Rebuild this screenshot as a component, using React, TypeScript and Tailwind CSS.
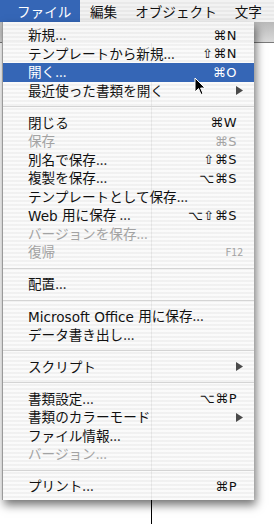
import React from 'react';

type Entry =
  | { label: React.ReactNode; keys?: string; off?: boolean; sub?: boolean; on?: boolean; fkey?: string }
  | 'sep';

// Latin words sit on the CJK baseline without growing the line box
const Latin = ({ children }: { children: React.ReactNode }) => (
  <span
    className="relative top-[1.2px] align-top text-[13.6px] leading-none"
    style={{ fontFamily: '"DejaVu Sans", sans-serif' }}
  >
    {children}
  </span>
);

const entries: Entry[] = [
  { label: '新規...', keys: '⌘N' },
  { label: 'テンプレートから新規...', keys: '⇧⌘N' },
  { label: '開く...', keys: '⌘O', on: true },
  { label: '最近使った書類を開く', sub: true },
  'sep',
  { label: '閉じる', keys: '⌘W' },
  { label: '保存', keys: '⌘S', off: true },
  { label: '別名で保存...', keys: '⇧⌘S' },
  { label: '複製を保存...', keys: '⌥⌘S' },
  { label: 'テンプレートとして保存...' },
  { label: <><Latin>Web </Latin>用に保存 ...</>, keys: '⌥⇧⌘S' },
  { label: 'バージョンを保存...', off: true },
  { label: '復帰', fkey: 'F12', off: true },
  'sep',
  { label: '配置...' },
  'sep',
  { label: <><Latin>Microsoft Office </Latin>用に保存...</> },
  { label: 'データ書き出し...' },
  'sep',
  { label: 'スクリプト', sub: true },
  'sep',
  { label: '書類設定...', keys: '⌥⌘P' },
  { label: '書類のカラーモード', sub: true },
  { label: 'ファイル情報...' },
  { label: 'バージョン...', off: true },
  'sep',
  { label: 'プリント...', keys: '⌘P' },
];

const font = { fontFamily: '"Noto Sans CJK JP", "DejaVu Sans", sans-serif' };

const Arrow = ({ white }: { white?: boolean }) => (
  <svg width="7" height="9" viewBox="0 0 7 9">
    <polygon points="0,0 7,4.5 0,9" fill={white ? '#fff' : '#4a4a4a'} />
  </svg>
);

const Cursor = () => (
  <svg width="12" height="19" viewBox="0 0 12 19" className="absolute left-[194px] top-[77px]">
    <path
      d="M1 1 L1 15 L4.5 11.5 L7 17.5 L9 16.6 L6.6 11 L11 11 Z"
      fill="#000"
      stroke="#fff"
      strokeWidth="1"
      strokeLinejoin="round"
    />
  </svg>
);

const Row = ({ e }: { e: Exclude<Entry, 'sep'> }) => {
  const color = e.on ? 'text-white' : e.off ? 'text-[#a3a3a3]' : 'text-[#111]';
  return (
    <div
      className={`flex h-[18.5px] items-center pl-[25px] ${e.sub || e.fkey ? 'pr-[11px]' : 'pr-[17px]'} ${
        e.on ? 'bg-[#3566b6]' : ''
      } ${color}`}
    >
      <span className="flex-1 whitespace-nowrap text-[13.6px] leading-none">{e.label}</span>
      {e.keys && (
        <span className="text-[13px] leading-none tracking-[0.5px]" style={{ fontFamily: '"DejaVu Sans", sans-serif' }}>
          {e.keys}
        </span>
      )}
      {e.fkey && <span className="text-[10.5px] leading-none">{e.fkey}</span>}
      {e.sub && <Arrow white={e.on} />}
    </div>
  );
};

export default function App() {
  return (
    <div className="relative h-[524px] w-[274px] overflow-hidden bg-white" style={font}>
      {/* menu bar */}
      <div className="flex h-[22px] items-center bg-[repeating-linear-gradient(to_bottom,#f2f2f2_0px,#f2f2f2_2px,#e9e9e9_2px,#e9e9e9_4px)] text-[13.6px] text-[#111]">
        <div className="flex h-full w-[80px] items-center bg-[#3566b6] pl-[17px] text-white">ファイル</div>
        <div className="ml-[10px]">編集</div>
        <div className="ml-[18px]">オブジェクト</div>
        <div className="ml-[18px]">文字</div>
      </div>

      {/* document window underneath */}
      <div className="h-[21px] border-b border-[#7a7a7a] bg-gradient-to-b from-[#b9b9b9] to-[#dadada]" />
      <div className="flex h-full">
        <div className="w-[151px]" />
        <div className="w-px bg-black" />
      </div>

      {/* open menu */}
      <div className="absolute left-[2px] top-[22px] w-[252px] border-l border-[#9a9a9a] bg-[repeating-linear-gradient(to_bottom,rgba(250,250,250,0.94)_0px,rgba(250,250,250,0.94)_2px,rgba(240,240,240,0.94)_2px,rgba(240,240,240,0.94)_4px)] py-[4px] shadow-[2px_5px_9px_rgba(0,0,0,0.55)]">
        {entries.map((e, i) =>
          e === 'sep' ? (
            <div key={i} className="flex h-[13.5px] items-center">
              <div className="h-px w-full bg-[#d4d4d4]" />
            </div>
          ) : (
            <Row key={i} e={e} />
          ),
        )}
      </div>

      <Cursor />
    </div>
  );
}
